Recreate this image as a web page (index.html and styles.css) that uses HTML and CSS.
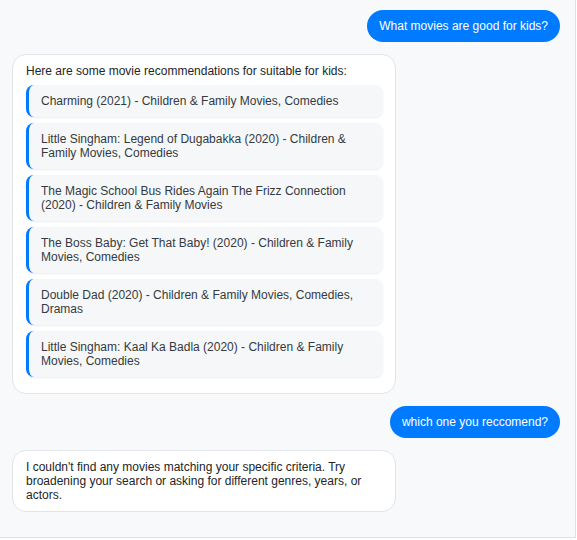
FILE: index.html
```html
<!DOCTYPE html>
<html>
<head>
<meta charset="utf-8">
<link rel="stylesheet" href="styles.css">
</head>
<body>
<div class="chat">
  <div class="msg user">What movies are good for kids?</div>
  <div class="msg bot">
    <div class="intro">Here are some movie recommendations for suitable for kids:</div>
    <div class="item">Charming (2021) - Children &amp; Family Movies, Comedies</div>
    <div class="item">Little Singham: Legend of Dugabakka (2020) - Children &amp; Family Movies, Comedies</div>
    <div class="item">The Magic School Bus Rides Again The Frizz Connection (2020) - Children &amp; Family Movies</div>
    <div class="item">The Boss Baby: Get That Baby! (2020) - Children &amp; Family Movies, Comedies</div>
    <div class="item">Double Dad (2020) - Children &amp; Family Movies, Comedies, Dramas</div>
    <div class="item">Little Singham: Kaal Ka Badla (2020) - Children &amp; Family Movies, Comedies</div>
  </div>
  <div class="msg user">which one you reccomend?</div>
  <div class="msg bot text">I couldn't find any movies matching your specific criteria. Try broadening your search or asking for different genres, years, or actors.</div>
</div>
</body>
</html>
```
FILE: styles.css
```css
html, body {
  margin: 0;
  padding: 0;
  background: #ffffff;
}
body {
  font-family: "Liberation Sans", Arial, sans-serif;
  font-size: 12px;
  line-height: 14px;
}
.chat {
  box-sizing: border-box;
  width: 576px;
  height: 538px;
  padding: 10px 15px 0 12px;
  background: #f8f9fa;
  border-right: 1px solid #dee2e6;
  border-bottom: 1px solid #dee2e6;
  display: flex;
  flex-direction: column;
  gap: 12px;
  overflow: hidden;
}
.msg {
  box-sizing: border-box;
}
.user {
  align-self: flex-end;
  background: #007bff;
  color: #ffffff;
  border-radius: 16px;
  padding: 9px 12px;
}
.bot {
  align-self: flex-start;
  width: 384px;
  background: #ffffff;
  border: 1px solid #e1e5ea;
  border-radius: 14px;
  padding: 9px 12px 10px 13px;
  color: #212529;
}
.bot.text {
  padding-bottom: 9px;
}
.intro {
  margin-bottom: 7px;
}
.item {
  background: #f6f7f9;
  border-left: 3px solid #007bff;
  border-radius: 8px;
  padding: 9px 12px;
  margin-bottom: 6px;
  color: #343a40;
  box-shadow: 0 1px 2px rgba(0, 0, 0, 0.08);
}
```
